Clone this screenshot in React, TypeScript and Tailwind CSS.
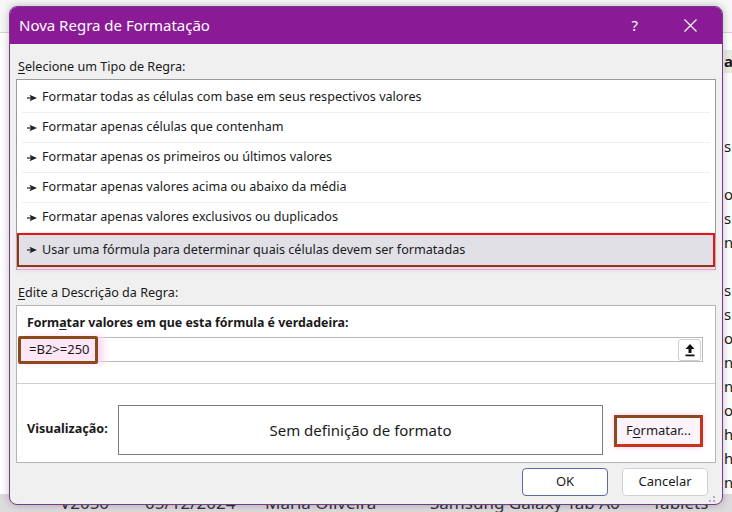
import { ReactNode } from 'react';

const rules = [
  'Formatar todas as células com base em seus respectivos valores',
  'Formatar apenas células que contenham',
  'Formatar apenas os primeiros ou últimos valores',
  'Formatar apenas valores acima ou abaixo da média',
  'Formatar apenas valores exclusivos ou duplicados',
];

// fragments of the sheet behind the dialog (right edge)
const sheetRows = ['', '', 's', '', 'os', 's', 'ne', '', 's', 's', 'os', 'ne', 'ne', 'os', 'h', 'h', 'ne'];

const Dart = () => (
  <svg width="10" height="8" viewBox="0 0 10 8" className="shrink-0">
    <rect x="0" y="3.4" width="5" height="1.2" fill="#222" />
    <path d="M2.5 0.8L10 4L2.5 7.2L4 4Z" fill="#222" />
  </svg>
);

const RuleRow = ({ children, selected }: { children: ReactNode; selected?: boolean }) => (
  <div
    className={
      selected
        ? 'flex h-[34px] items-center gap-[5px] border-2 border-t-[#e8141a] border-r-[#e8141a] border-b-[#8c3a14] border-l-[#8c3a14] bg-[#e1e0e6] pl-[8px] shadow-[0_3px_4px_#f6c9ea]'
        : 'mx-[5px] flex h-[30px] items-center gap-[5px] border-b border-[#efefef] pl-[5px]'
    }
  >
    <Dart />
    <span>{children}</span>
  </div>
);

export default function App() {
  return (
    <div className="relative h-[512px] w-[732px] overflow-hidden bg-white text-[12.6px] text-[#1a1a1a]" style={{ fontFamily: '"Noto Sans", "Open Sans", sans-serif' }}>
      {/* spreadsheet behind */}
      <div className="flex h-full flex-col">
        <div className="h-[33px] shrink-0 border-b border-[#d4d4d4] bg-[#f7f7f7]" />
        <div className="h-[16px] shrink-0" />
        <div className="flex h-[25px] shrink-0 items-center justify-end text-[15px] font-bold">
          <span className="w-[8px] overflow-hidden bg-[#e9eee4]">a</span>
        </div>
        <div className="h-[12px] shrink-0" />
        {sheetRows.map((t, i) => (
          <div key={i} className="flex h-[24px] shrink-0 items-center justify-end text-[15px]">
            <span className="w-[8px] overflow-hidden whitespace-nowrap">{t}</span>
          </div>
        ))}
        <div className="flex h-[18px] shrink-0 items-center bg-[#dedbdf] text-[17px] leading-[18px] text-[#333]">
          <span className="ml-[60px] w-[85px]">V2050</span>
          <span className="w-[120px]">05/12/2024</span>
          <span className="w-[165px]">Maria Oliveira</span>
          <span className="w-[222px]">Samsung Galaxy Tab A6</span>
          <span>Tablets</span>
        </div>
      </div>

      {/* dialog */}
      <div className="absolute left-[9px] top-[6px] flex h-[499px] w-[714px] flex-col overflow-hidden rounded-[8px] border border-[#7a3a8c] bg-[#f0f0f0] shadow-[0_0_8px_rgba(0,0,0,0.25)]">
        <div className="flex h-[37px] shrink-0 items-center bg-[#8b1a96] pl-[9px] text-white">
          <span className="flex-1 text-[15px]">Nova Regra de Formatação</span>
          <span className="mr-[46px] text-[15px]">?</span>
          <svg width="13" height="13" viewBox="0 0 13 13" className="mr-[25px]">
            <path d="M0.5 0.5L12.5 12.5M12.5 0.5L0.5 12.5" stroke="white" strokeWidth="1.2" />
          </svg>
        </div>

        <div className="flex flex-1 flex-col px-[6px]">
          <div className="pl-[2px] pt-[14px] leading-[18px]">
            <span className="underline underline-offset-2">S</span>elecione um Tipo de Regra:
          </div>
          <div className="mt-[3px] h-[191px] border border-[#9a9a9a] bg-white pt-[3px]">
            {rules.map((r) => (
              <RuleRow key={r}>{r}</RuleRow>
            ))}
            <RuleRow selected>Usar uma fórmula para determinar quais células devem ser formatadas</RuleRow>
          </div>

          <div className="pl-[2px] pt-[14px] leading-[18px]">
            <span className="underline underline-offset-2">E</span>dite a Descrição da Regra:
          </div>
          <div className="mt-[3px] flex h-[158px] flex-col border border-[#b4b4b4] bg-white">
            <div className="pl-[10px] pt-[8px] text-[12.4px] font-bold leading-[18px]">
              Form<span className="underline underline-offset-2">a</span>tar valores em que esta fórmula é verdadeira:
            </div>
            <div className="ml-[1px] mr-[12px] mt-[5px] flex h-[25px] items-center border border-[#b9b9b9]">
              <div className="-ml-[1px] flex h-[28px] w-[80px] items-center rounded-[2px] border-[3px] border-[#8c4a1c] bg-[#fde6f5] pl-[8px] text-[13px] shadow-[6px_0_6px_#fbdcf2]">
                =B2&gt;=250
              </div>
              <div className="flex-1" />
              <div className="mr-[1px] flex h-[22px] w-[23px] items-center justify-center rounded-[3px] border border-[#cfcfcf] bg-white">
                <svg width="12" height="14" viewBox="0 0 12 14">
                  <path d="M6 1L1.5 6H4.5V10H7.5V6H10.5Z" fill="#111" />
                  <rect x="1.5" y="11.5" width="9" height="1.8" fill="#111" />
                </svg>
              </div>
            </div>
            <div className="mt-[21px] flex flex-1 items-center border-t border-[#cfcfcf] pb-[1px]">
              <span className="w-[101px] pl-[10px] pt-[14px] font-bold">Visualização:</span>
              <div className="mt-[15px] flex h-[50px] w-[485px] items-center justify-center border border-[#7c7c7c] text-[15px]">
                Sem definição de formato
              </div>
              <div className="ml-[11px] mt-[16px] flex h-[32px] w-[89px] items-center justify-center border-[3px] border-t-[#8c4a1c] border-l-[#8c4a1c] border-b-[#c83218] border-r-[#c83218] bg-[#fcf3fb] text-[13px] shadow-[0_0_6px_#f8cdee]">
                F<span className="underline underline-offset-2">o</span>rmatar...
              </div>
            </div>
          </div>

          <div className="flex flex-1 items-start justify-end gap-[14px] pr-[8px] pt-[5px]">
            <button className="h-[28px] w-[86px] rounded-[4px] border border-[#5a6ba6] bg-white text-[13px]">OK</button>
            <button className="h-[28px] w-[86px] rounded-[4px] border border-[#d0d0d0] bg-white text-[13px]">Cancelar</button>
          </div>
          <div className="flex justify-end pb-[2px] pr-[1px]">
            <svg width="10" height="10" viewBox="0 0 10 10">
              <g fill="#b0b0b0">
                <rect x="8" y="0" width="2" height="2" />
                <rect x="4" y="4" width="2" height="2" />
                <rect x="8" y="4" width="2" height="2" />
                <rect x="0" y="8" width="2" height="2" />
                <rect x="4" y="8" width="2" height="2" />
                <rect x="8" y="8" width="2" height="2" />
              </g>
            </svg>
          </div>
        </div>
      </div>
    </div>
  );
}
